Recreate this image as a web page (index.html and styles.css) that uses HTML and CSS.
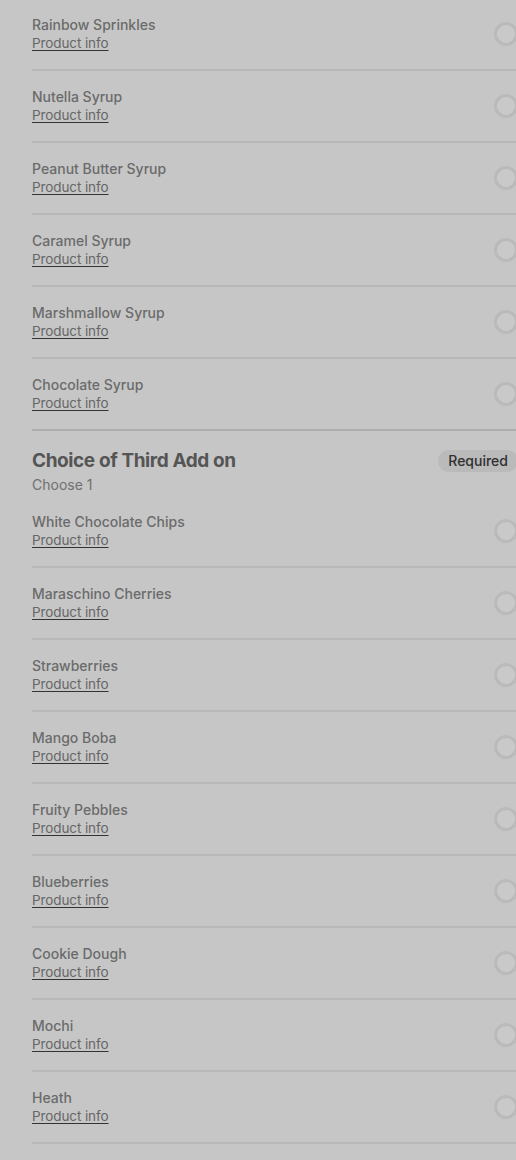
FILE: index.html
```html
<!DOCTYPE html>
<html lang="en">
<head>
    <meta charset="UTF-8">
    <meta name="viewport" content="width=device-width, initial-scale=1.0">
    <title>Add ons</title>
    <link rel="stylesheet" href="styles.css">
</head>
<body>
    <div class="sheet">
        <!-- Second add on (scrolled) -->
        <div class="option-list first">
            <div class="option"><div class="option-text"><div class="option-name">Rainbow Sprinkles</div><a class="option-info" href="#">Product info</a></div><span class="radio"></span></div>
            <div class="option"><div class="option-text"><div class="option-name">Nutella Syrup</div><a class="option-info" href="#">Product info</a></div><span class="radio"></span></div>
            <div class="option"><div class="option-text"><div class="option-name">Peanut Butter Syrup</div><a class="option-info" href="#">Product info</a></div><span class="radio"></span></div>
            <div class="option"><div class="option-text"><div class="option-name">Caramel Syrup</div><a class="option-info" href="#">Product info</a></div><span class="radio"></span></div>
            <div class="option"><div class="option-text"><div class="option-name">Marshmallow Syrup</div><a class="option-info" href="#">Product info</a></div><span class="radio"></span></div>
            <div class="option last"><div class="option-text"><div class="option-name">Chocolate Syrup</div><a class="option-info" href="#">Product info</a></div><span class="radio"></span></div>
        </div>

        <!-- Third add on -->
        <div class="group">
            <div class="group-head">
                <div>
                    <h2 class="group-title">Choice of Third Add on</h2>
                    <div class="group-sub">Choose 1</div>
                </div>
                <span class="pill">Required</span>
            </div>
            <div class="option-list">
                <div class="option"><div class="option-text"><div class="option-name">White Chocolate Chips</div><a class="option-info" href="#">Product info</a></div><span class="radio"></span></div>
                <div class="option"><div class="option-text"><div class="option-name">Maraschino Cherries</div><a class="option-info" href="#">Product info</a></div><span class="radio"></span></div>
                <div class="option"><div class="option-text"><div class="option-name">Strawberries</div><a class="option-info" href="#">Product info</a></div><span class="radio"></span></div>
                <div class="option"><div class="option-text"><div class="option-name">Mango Boba</div><a class="option-info" href="#">Product info</a></div><span class="radio"></span></div>
                <div class="option"><div class="option-text"><div class="option-name">Fruity Pebbles</div><a class="option-info" href="#">Product info</a></div><span class="radio"></span></div>
                <div class="option"><div class="option-text"><div class="option-name">Blueberries</div><a class="option-info" href="#">Product info</a></div><span class="radio"></span></div>
                <div class="option"><div class="option-text"><div class="option-name">Cookie Dough</div><a class="option-info" href="#">Product info</a></div><span class="radio"></span></div>
                <div class="option"><div class="option-text"><div class="option-name">Mochi</div><a class="option-info" href="#">Product info</a></div><span class="radio"></span></div>
                <div class="option"><div class="option-text"><div class="option-name">Heath</div><a class="option-info" href="#">Product info</a></div><span class="radio"></span></div>
            </div>
        </div>
    </div>
</body>
</html>
```

FILE: styles.css
```css
html, body {
    margin: 0;
    padding: 0;
    overflow: hidden;
}

body {
    font-family: Inter, "Noto Sans", Arial, sans-serif;
    background-color: #c6c6c6;
    height: 1160px;
}

.sheet {
    width: 486px;
    padding-left: 32px;
}

.first {
    margin-top: -1px;
}

.option {
    display: flex;
    align-items: center;
    justify-content: space-between;
    padding: 17px 0;
    border-bottom: 2px solid #b8b8b8;
}

.option.last {
    border-bottom-color: #adadad;
}

.option-text {
    line-height: 18px;
}

.option-name {
    font-size: 14px;
    line-height: 18px;
    font-weight: 500;
    color: #6b6b6b;
}

.option-info {
    display: block;
    width: max-content;
    font-size: 13.5px;
    line-height: 18px;
    letter-spacing: -0.1px;
    color: #666;
    text-decoration: underline;
    text-decoration-color: #333;
    text-underline-offset: 2px;
}

.radio {
    width: 24px;
    height: 24px;
    box-sizing: border-box;
    border: 3px solid #bababa;
    border-radius: 50%;
    background-color: #c9c9c9;
}

.group-head {
    display: flex;
    justify-content: space-between;
    align-items: flex-start;
    padding: 18px 0 1px;
}

.group-title {
    margin: 0 0 2px;
    font-size: 19px;
    line-height: 24px;
    font-weight: 700;
    letter-spacing: -0.4px;
    color: #555;
}

.group-sub {
    font-size: 14px;
    line-height: 20px;
    color: #707070;
}

.pill {
    margin-top: 1px;
    padding: 2px 10px;
    border-radius: 12px;
    background-color: #bababa;
    color: #303030;
    font-size: 14px;
    line-height: 18px;
    font-weight: 500;
}
```
